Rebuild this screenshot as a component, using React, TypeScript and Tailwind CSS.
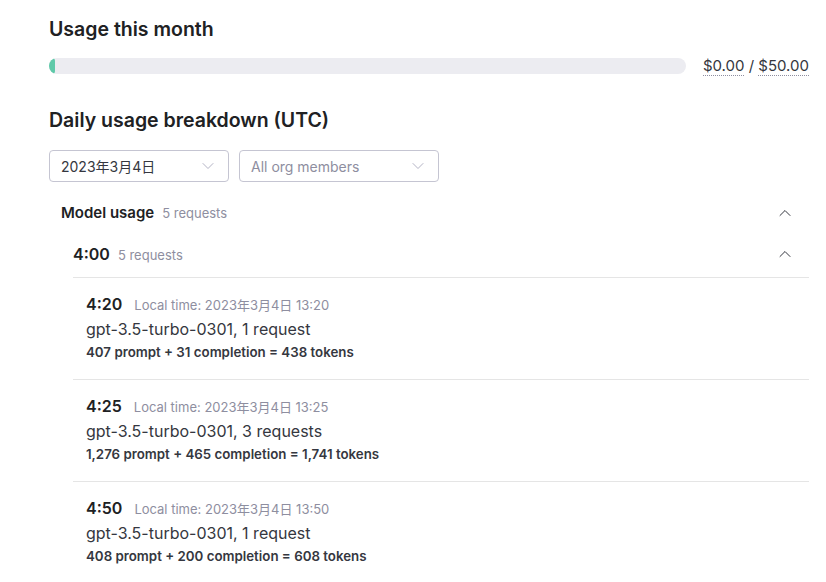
import { ChevronDown, ChevronUp } from "lucide-react"

const entries = [
  {
    time: "4:20",
    local: "2023年3月4日 13:20",
    model: "gpt-3.5-turbo-0301, 1 request",
    tokens: "407 prompt + 31 completion = 438 tokens",
  },
  {
    time: "4:25",
    local: "2023年3月4日 13:25",
    model: "gpt-3.5-turbo-0301, 3 requests",
    tokens: "1,276 prompt + 465 completion = 1,741 tokens",
  },
  {
    time: "4:50",
    local: "2023年3月4日 13:50",
    model: "gpt-3.5-turbo-0301, 1 request",
    tokens: "408 prompt + 200 completion = 608 tokens",
  },
]

function Select({ label, width, muted }: { label: string; width: string; muted?: boolean }) {
  return (
    <div
      className={`${width} h-[32px] flex items-center justify-between pl-[11px] pr-[10px] border border-[#c5c5d2] rounded-[4px] bg-white`}
    >
      <span className={`text-[14px] ${muted ? "text-[#8e8ea0]" : "text-[#353740]"}`}>{label}</span>
      <ChevronDown className="w-[20px] h-[20px] text-[#acacbe]" strokeWidth={1.1} />
    </div>
  )
}

export default function App() {
  return (
    <div
      className="w-[826px] h-[582px] bg-white overflow-hidden pl-[49px] pr-[17px] text-[#202123]"
      style={{ fontFamily: "Inter, 'Noto Sans CJK JP', sans-serif" }}
    >
      <h2 className="pt-[17px] text-[19.5px] leading-[24px] font-semibold">Usage this month</h2>

      <div className="mt-[15px] flex items-center">
        <div className="w-[637px] h-[16px] rounded-full bg-[#ececf1] overflow-hidden">
          <div className="w-[6px] h-full rounded-full bg-[#5fc9a9]" />
        </div>
        <div className="ml-auto text-[15px] text-[#353740] leading-[20px]">
          <span className="border-b border-dotted border-[#8e8ea0]">$0.00</span>
          <span> / </span>
          <span className="border-b border-dotted border-[#8e8ea0]">$50.00</span>
        </div>
      </div>

      <h2 className="mt-[32px] text-[19.5px] leading-[24px] font-semibold">Daily usage breakdown (UTC)</h2>

      <div className="mt-[18px] flex gap-[10px]">
        <Select label="2023年3月4日" width="w-[180px]" />
        <Select label="All org members" width="w-[200px]" muted />
      </div>

      <div className="mt-[20px] pl-[12px] pr-[14px] flex items-center justify-between h-[22px]">
        <div className="flex items-baseline gap-[8px]">
          <span className="text-[15px] font-semibold">Model usage</span>
          <span className="text-[13px] text-[#8e8ea0]">5 requests</span>
        </div>
        <ChevronUp className="w-[20px] h-[20px] text-[#353740]" strokeWidth={1.2} />
      </div>

      <div className="mt-[19px] ml-[24px] pr-[14px] flex items-center justify-between h-[22px]">
        <div className="flex items-baseline gap-[8px]">
          <span className="text-[16px] font-semibold">4:00</span>
          <span className="text-[13px] text-[#8e8ea0]">5 requests</span>
        </div>
        <ChevronUp className="w-[20px] h-[20px] text-[#353740]" strokeWidth={1.2} />
      </div>

      <div className="mt-[12px] ml-[24px] w-[736px]">
        {entries.map((e) => (
          <div key={e.time} className="border-t border-[#e5e5e5] pl-[13px] pt-[15px] h-[102px]">
            <div className="flex items-baseline gap-[12px]">
              <span className="text-[16px] font-semibold leading-[22px]">{e.time}</span>
              <span className="text-[13px] text-[#8e8ea0]">Local time: {e.local}</span>
            </div>
            <div className="mt-[2px] text-[16px] leading-[22px] text-[#353740]">{e.model}</div>
            <div className="mt-[3px] text-[13.3px] font-semibold leading-[18px] text-[#353740]">{e.tokens}</div>
          </div>
        ))}
      </div>
    </div>
  )
}
